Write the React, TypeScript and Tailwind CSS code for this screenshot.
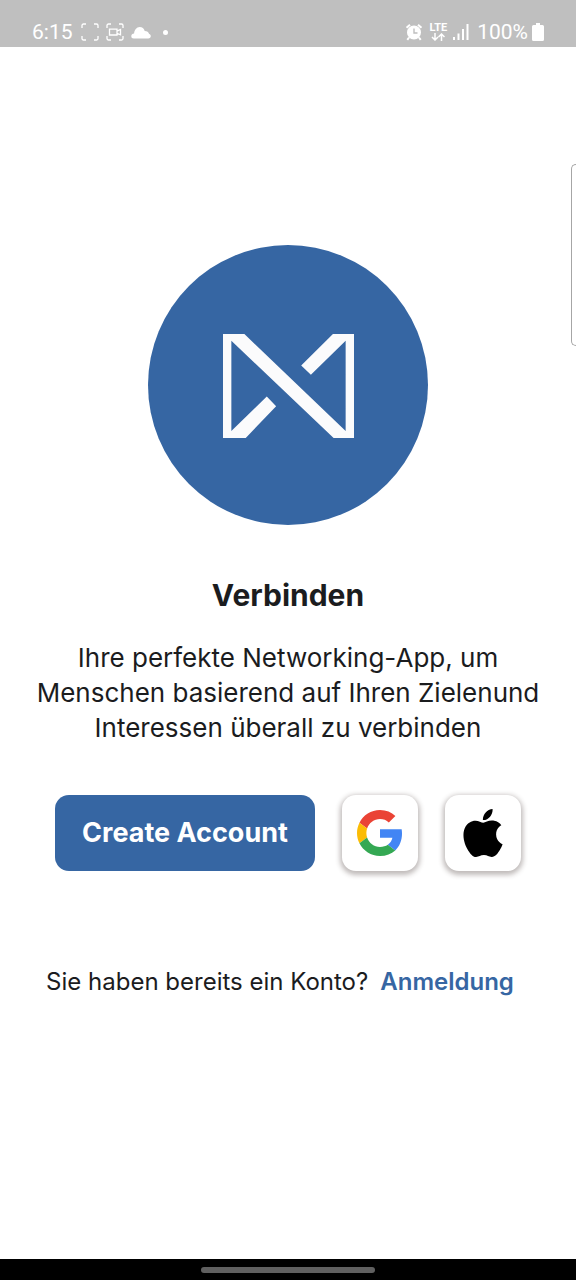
import type { ReactNode } from 'react';
import { SiApple } from 'react-icons/si';

function CaptureFrame({ children }: { children?: ReactNode }) {
  return (
    <svg viewBox="0 0 18 18" className="h-[18px] w-[18px]" fill="none" stroke="currentColor" strokeWidth="1.3" aria-hidden="true">
      <path d="M1 5V2.500A1.500 1.500 0 0 1 2.500 1H5M13 1h2.500A1.500 1.500 0 0 1 17 2.500V5M17 13v2.500a1.500 1.500 0 0 1-1.500 1.500H13M5 17H2.500A1.500 1.500 0 0 1 1 15.500V13" />
      {children}
    </svg>
  );
}

function StatusBar() {
  return (
    <header className="flex h-[47px] items-end justify-between bg-[#bfbfbf] px-8 pb-[5px] font-['Roboto','Liberation_Sans',sans-serif] text-white">
      <div className="flex h-5 items-center">
        <span className="text-[21px] leading-5">6:15</span>
        <div className="ml-2 flex items-center gap-[7px]">
          <CaptureFrame />
          <CaptureFrame>
            <path d="M3.500 6.200h7.500v5.800H3.500zM11 8.200l3.500-1.700v5.300L11 10.300z" />
          </CaptureFrame>
          <svg viewBox="0 0 20 13" className="h-[13px] w-5" fill="currentColor" aria-hidden="true">
            <path d="M2.800 12.500C1.200 12.500.3 11.500.3 10.200c0-1.600 1.200-2.600 2.800-2.700C3.300 4.200 5.600 1 8.700 1c2.600 0 4.300 1.600 5 3.900 2.500 0 3.900 1.200 4.400 3 1.100.3 1.700 1.100 1.700 2.200 0 1.400-1 2.400-2.500 2.400z" />
          </svg>
        </div>
        <span className="ml-3 h-[5px] w-[5px] rounded-full bg-white" />
      </div>
      <div className="flex h-5 items-center">
        <svg viewBox="0 0 18 18" className="h-[18px] w-[18px]" aria-hidden="true">
          <circle cx="9" cy="9.500" r="7" fill="white" />
          <path d="M1.500 4.800 5 1.700M16.500 4.800 13 1.700M4 14.500l-1.700 2.300M14 14.500l1.700 2.300" stroke="white" strokeWidth="2" />
          <path d="M9 5.500v4.500h3.500" fill="none" stroke="#bfbfbf" strokeWidth="1.400" />
        </svg>
        <div className="ml-1.5 flex flex-col items-center">
          <span className="text-[11px] leading-[10px] font-bold">LTE</span>
          <svg viewBox="0 0 14 8" className="h-2 w-3.5" fill="none" stroke="currentColor" strokeWidth="1.500" aria-hidden="true">
            <path d="M4 0v6.500M1 4l3 3 3-3M10.500 8V1.500M7.500 4l3-3 3 3" />
          </svg>
        </div>
        <svg viewBox="0 0 16 16" className="ml-1.5 h-4 w-4" fill="currentColor" aria-hidden="true">
          <path d="M0 13h2v3H0zM4.500 9.500h2V16h-2zM9 5h2v11H9zM13.500 0h2v16h-2z" />
        </svg>
        <span className="ml-2 text-[21px] leading-5">100%</span>
        <svg viewBox="0 0 12 18" className="ml-1 h-[18px] w-3" fill="currentColor" aria-hidden="true">
          <path d="M4 0h4v2h2.500A1.500 1.500 0 0 1 12 3.500v13a1.500 1.500 0 0 1-1.500 1.500h-9A1.500 1.500 0 0 1 0 16.500v-13A1.500 1.500 0 0 1 1.500 2H4z" />
        </svg>
      </div>
    </header>
  );
}

function Logo() {
  return (
    <div className="flex size-[280px] items-center justify-center rounded-full bg-[#3666a3] pt-0.5">
      <svg viewBox="39 28 392 311" className="h-[104px] w-[131px]" role="img" aria-label="Logo">
        <path
          fill="#fbfbfc"
          d="M39 28H103L406 318V48L302 150L273 122L368 28H431V339H370L64 48V318L170 215L198 244L107 339H39Z"
        />
      </svg>
    </div>
  );
}

function GoogleMark() {
  return (
    <svg viewBox="0 0 48 48" className="size-[46px]" aria-hidden="true">
      <path fill="#EA4335" d="M24 9.500c3.540 0 6.710 1.220 9.210 3.600l6.850-6.850C35.900 2.380 30.470 0 24 0 14.620 0 6.510 5.380 2.560 13.220l7.980 6.190C12.430 13.720 17.740 9.500 24 9.500z" />
      <path fill="#4285F4" d="M46.980 24.550c0-1.570-.15-3.090-.38-4.550H24v9.020h12.940c-.58 2.960-2.260 5.480-4.780 7.180l7.730 6c4.510-4.180 7.090-10.360 7.090-17.650z" />
      <path fill="#FBBC05" d="M10.530 28.590c-.48-1.450-.76-2.990-.76-4.590s.27-3.140.76-4.590l-7.980-6.190C.92 16.460 0 20.120 0 24c0 3.880.92 7.540 2.560 10.780l7.970-6.190z" />
      <path fill="#34A853" d="M24 48c6.480 0 11.930-2.130 15.890-5.810l-7.730-6c-2.150 1.450-4.920 2.300-8.160 2.300-6.260 0-11.570-4.220-13.470-9.910l-7.980 6.190C6.510 42.620 14.620 48 24 48z" />
    </svg>
  );
}

function SocialButton({ label, children }: { label: string; children: ReactNode }) {
  return (
    <button
      type="button"
      aria-label={label}
      className="flex size-[76px] items-center justify-center rounded-[14px] bg-white shadow-[0_2px_5px_2px_rgba(60,45,40,0.32)]"
    >
      {children}
    </button>
  );
}

export default function App() {
  return (
    <div className="relative flex min-h-screen flex-col bg-white font-['Inter','Noto_Sans',sans-serif] text-[#1b1c1e]">
      <StatusBar />
      <div className="absolute top-[164px] right-0 h-[182px] w-[5px] rounded-l-lg border border-r-0 border-[#a6a6a6]" />

      <main className="flex flex-1 flex-col items-center pt-[198px]">
        <Logo />
        <h1 className="mt-[50px] text-[30px] leading-10 font-bold">Verbinden</h1>
        <p className="mt-[25px] text-center text-[26px] leading-[35px]">
          Ihre perfekte Networking-App, um
          <br />
          Menschen basierend auf Ihren Zielenund
          <br />
          Interessen überall zu verbinden
        </p>
        <div className="mt-[50px] flex items-center gap-[27px]">
          <button type="button" className="h-[76px] w-[260px] rounded-[14px] bg-[#3666a3] text-[27px] font-bold text-white">
            Create Account
          </button>
          <SocialButton label="Google">
            <GoogleMark />
          </SocialButton>
          <SocialButton label="Apple">
            <SiApple className="size-12 text-black" />
          </SocialButton>
        </div>
        <p className="mt-[93px] mr-4 flex items-center gap-3 text-2xl leading-[36px]">
          <span>Sie haben bereits ein Konto?</span>
          <a href="#anmeldung" className="font-semibold text-[#3666a3]">
            Anmeldung
          </a>
        </p>
      </main>

      <footer className="flex h-[21px] items-center justify-center bg-black">
        <span className="h-1.5 w-[174px] rounded-full bg-[#606060]" />
      </footer>
    </div>
  );
}
